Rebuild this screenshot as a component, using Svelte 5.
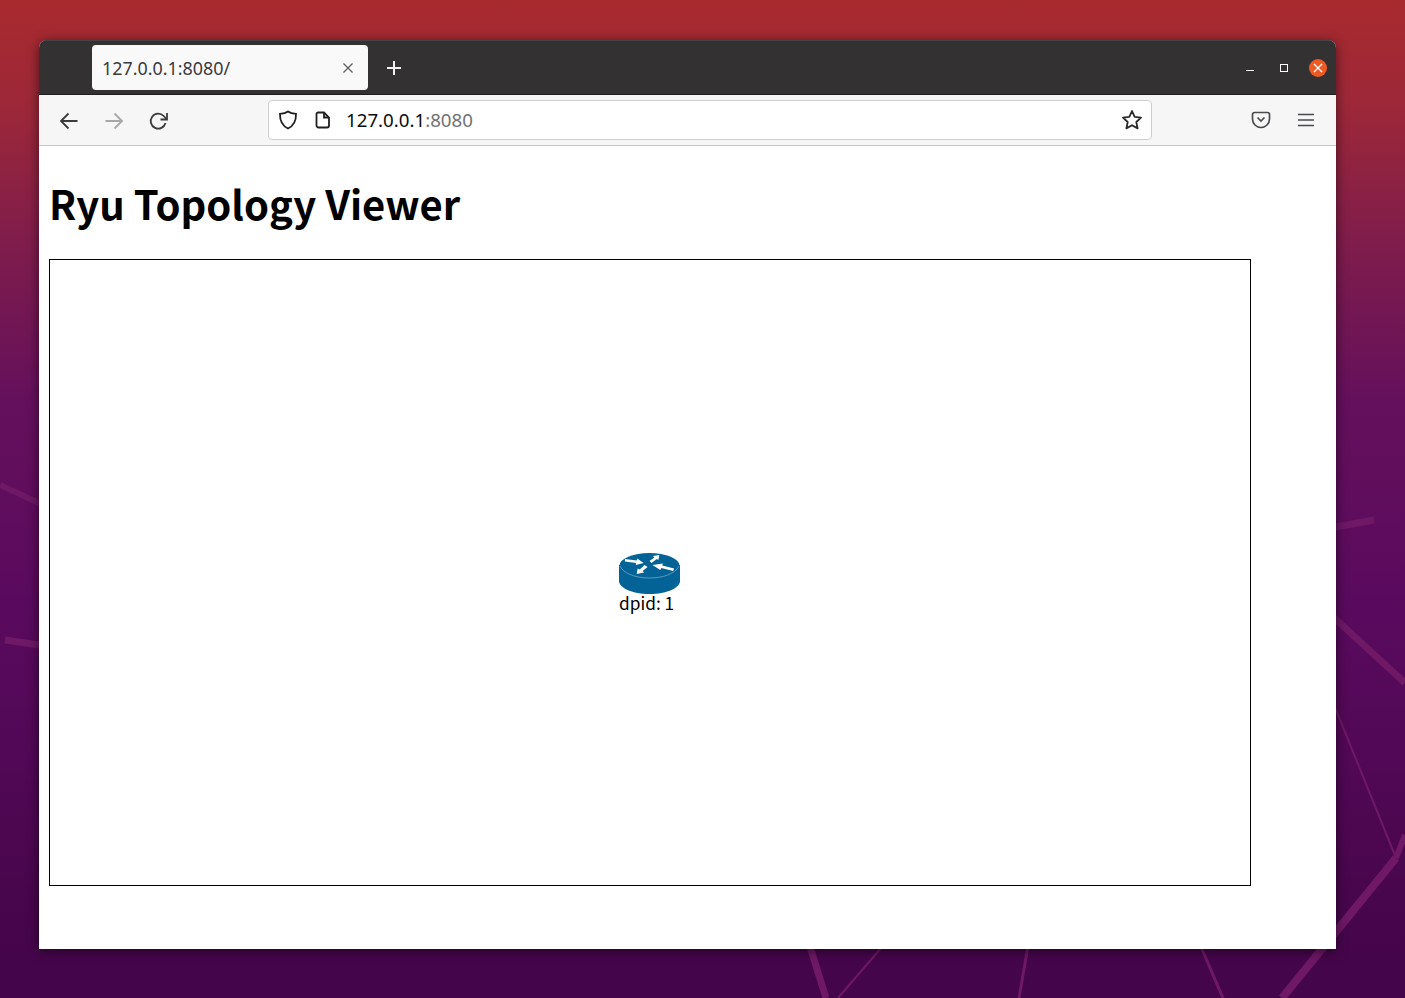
<script>
	const streaks = [
		{ d: 'M0 485L39 503', w: 6 },
		{ d: 'M5 640L39 645', w: 7 },
		{ d: 'M1330 528L1374 520', w: 7 },
		{ d: 'M1330 614L1405 683', w: 7 },
		{ d: 'M1330 695L1396 858', w: 2 },
		{ d: 'M1396 858L1282 998', w: 8 },
		{ d: 'M1396 858L1405 835', w: 6 },
		{ d: 'M808 940L826 998', w: 7 },
		{ d: 'M888 940L838 998', w: 2 },
		{ d: 'M1029 940L1019 998', w: 3 },
		{ d: 'M1198 940L1223 998', w: 3 }
	];
</script>

<div class="desktop">
	<svg class="streaks" width="1405" height="998" aria-hidden="true">
		{#each streaks as s}
			<path d={s.d} stroke-width={s.w} />
		{/each}
	</svg>

	<div class="window">
		<header class="titlebar">
			<div class="tab">
				<span class="tab-title">127.0.0.1:8080/</span>
				<svg class="tab-close" width="12" height="12" viewBox="0 0 12 12">
					<path d="M1.500 1.500l9 9M10.500 1.500l-9 9" />
				</svg>
			</div>
			<svg class="new-tab" width="16" height="16" viewBox="0 0 16 16">
				<path d="M8 1v14M1 8h14" />
			</svg>
			<div class="win-controls">
				<span class="win-min"></span>
				<span class="win-max"></span>
				<span class="win-close">
					<svg width="10" height="10" viewBox="0 0 10 10">
						<path d="M1 1l8 8M9 1l-8 8" />
					</svg>
				</span>
			</div>
		</header>

		<nav class="toolbar">
			<svg class="tool nav" width="20" height="20" viewBox="0 0 20 20">
				<path d="M18.500 10H2M9.500 2.500L2 10l7.500 7.500" />
			</svg>
			<svg class="tool nav disabled" width="20" height="20" viewBox="0 0 20 20">
				<path d="M1.500 10H18M10.500 2.500L18 10l-7.500 7.500" />
			</svg>
			<svg class="tool nav" width="20" height="20" viewBox="0 0 20 20">
				<path d="M16.500 12a7.500 7.500 0 1 1-1.800-7L17.500 8" />
				<path d="M18 2v6.500h-6.500" fill="#3b3b3d" stroke="none" />
			</svg>

			<div class="urlbar">
				<svg class="url-icon" width="20" height="20" viewBox="0 0 20 20">
					<path d="M10 1.500c2 1.500 5 2.200 8 2.400 .2 7-2.500 12-8 14.600C4.500 15.900 1.800 10.900 2 3.900c3-.2 6-.9 8-2.400z" />
				</svg>
				<svg class="url-icon page" width="16" height="18" viewBox="0 0 16 18">
					<path d="M3 1.500h6l5 5v8a2 2 0 0 1-2 2H3.500a2 2 0 0 1-2-2V3a1.500 1.500 0 0 1 1.500-1.500z" />
					<path d="M9 1.500V6.500h5" fill="#1f1f21" stroke="none" />
				</svg>
				<span class="url"><span class="host">127.0.0.1</span>:8080</span>
				<svg class="star" width="22" height="22" viewBox="0 0 22 22">
					<path d="M11 2l2.700 5.900 6.300.8-4.700 4.300 1.300 6.400L11 16.200l-5.600 3.200 1.300-6.400L2 8.700l6.300-.8z" />
				</svg>
			</div>

			<svg class="tool pocket" width="20" height="18" viewBox="0 0 20 18">
				<path d="M3.500 1.500h13a2 2 0 0 1 2 2v4.500a8.500 8.500 0 0 1-17 0V3.500a2 2 0 0 1 2-2z" />
				<path d="M6.500 6.500L10 10l3.500-3.500" />
			</svg>
			<svg class="tool menu" width="16" height="14" viewBox="0 0 16 14">
				<path d="M0 1.500h16M0 7h16M0 12.500h16" />
			</svg>
		</nav>

		<main class="page-body">
			<h1>Ryu Topology Viewer</h1>
			<div class="graph">
				<div class="node">
					<svg width="61" height="41" viewBox="0 0 62 41" preserveAspectRatio="none">
						<path d="M0 12v16c0 7 14 13 31 13s31-6 31-13V12z" fill="#036397" />
						<ellipse cx="31" cy="12.500" rx="30.500" ry="12.500" fill="#036397" />
						<path d="M1 13c3 7 15 12 30 12s27-5 30-12" fill="none" stroke="#fff" stroke-opacity=".35" stroke-width="1" />
						<path class="arrow" d="M6 6l12 1.500 .5-2L25 10l-8 2 .5-2L6 8.500z" />
						<path class="arrow" d="M31 8l5-3.500L34.500 3 41 2l-1 5-1.500-1L33 10z" />
						<path class="arrow" d="M56 15.500l-12-3 .5-2-10.500 1.500 8 5 1-2 12 3z" />
						<path class="arrow" d="M29 14l-5 4 1.500 1.500L18 21l1-5.500 2 1 5-4.500z" />
					</svg>
					<span class="label">dpid: 1</span>
				</div>
			</div>
		</main>
	</div>
</div>

<style>
	:global(body) {
		margin: 0;
	}
	.desktop {
		position: relative;
		width: 1405px;
		height: 998px;
		box-sizing: border-box;
		padding: 40px 69px 49px 39px;
		overflow: hidden;
		background: linear-gradient(
			180deg,
			#a82a2e 0%,
			#9e2838 10%,
			#7e1c4c 25%,
			#65105c 40%,
			#5a0a5e 60%,
			#520856 75%,
			#48064c 90%,
			#44054a 100%
		);
		font-family: "Noto Sans", "Open Sans", sans-serif;
	}
	.streaks {
		position: absolute;
		top: 0;
		left: 0;
	}
	.streaks path {
		stroke: #6e1866;
		fill: none;
	}
	.window {
		position: relative;
		display: flex;
		flex-direction: column;
		height: 100%;
		border-radius: 8px 8px 0 0;
		overflow: hidden;
		background: #fff;
		box-shadow: 0 2px 12px rgba(0, 0, 0, 0.55);
	}
	.titlebar {
		flex: none;
		display: flex;
		align-items: center;
		height: 55px;
		box-sizing: border-box;
		padding-left: 53px;
		background: #333132;
		border-top: 1px solid #454344;
		border-bottom: 1px solid #1e1e1e;
	}
	.tab {
		display: flex;
		align-items: center;
		justify-content: space-between;
		width: 276px;
		height: 45px;
		box-sizing: border-box;
		margin-top: -1px;
		padding: 1px 14px 0 10px;
		background: #f9f9fa;
		border-radius: 4px;
		color: #3b3b3d;
		font-size: 17.900px;
	}
	.tab-close path {
		stroke: #5c5c60;
		stroke-width: 1.200;
		fill: none;
	}
	.new-tab {
		margin-left: 18px;
	}
	.new-tab path {
		stroke: #f2f2f2;
		stroke-width: 2;
		fill: none;
	}
	.win-controls {
		display: flex;
		align-items: center;
		margin-left: auto;
		padding-right: 9px;
	}
	.win-min {
		width: 8px;
		height: 1px;
		margin: 6px 26px 0 0;
		background: #fff;
	}
	.win-max {
		width: 6px;
		height: 6px;
		margin-right: 21px;
		border: 1px solid #fff;
	}
	.win-close {
		display: flex;
		align-items: center;
		justify-content: center;
		width: 18px;
		height: 18px;
		border-radius: 50%;
		background: #ee5a24;
	}
	.win-close path {
		stroke: #fff;
		stroke-width: 1.300;
		fill: none;
	}
	.toolbar {
		flex: none;
		display: flex;
		align-items: center;
		height: 51px;
		box-sizing: border-box;
		padding: 0 22px 0 20px;
		background: #f6f6f6;
		border-bottom: 1px solid #c8c8c8;
	}
	.tool {
		flex: none;
		margin-right: 25px;
	}
	.tool path {
		stroke: #3b3b3d;
		stroke-width: 1.800;
		fill: none;
	}
	.tool.nav {
		margin-top: 2px;
	}
	.tool.disabled path {
		stroke: #a8a8aa;
	}
	.urlbar {
		display: flex;
		align-items: center;
		width: 884px;
		height: 40px;
		box-sizing: border-box;
		margin-left: 74px;
		padding: 0 8px 0 9px;
		background: #fff;
		border: 1px solid #cfcfd1;
		border-radius: 4px;
		font-size: 18.700px;
		color: #737373;
	}
	.url-icon {
		flex: none;
	}
	.url-icon path {
		stroke: #1f1f21;
		stroke-width: 1.800;
		fill: none;
	}
	.url-icon.page {
		margin-left: 17px;
	}
	.url {
		margin: 0 0 2px 15px;
	}
	.host {
		color: #0c0c0d;
	}
	.star {
		margin-left: auto;
	}
	.star path {
		stroke: #2b2b2d;
		stroke-width: 1.800;
		fill: none;
		stroke-linejoin: round;
	}
	.pocket {
		margin-left: 99px;
		margin-right: 27px;
	}
	.pocket path {
		stroke: #4a4a4f;
		stroke-width: 1.700;
	}
	.menu {
		margin-right: 0;
	}
	.menu path {
		stroke: #4a4a4f;
		stroke-width: 1.500;
	}
	.page-body {
		flex: 1;
		padding: 0 10px;
		background: #fff;
		color: #000;
	}
	h1 {
		margin: 25px 0 23px;
		font-family: "Noto Sans CJK JP", "Noto Sans", sans-serif;
		font-size: 40px;
		font-weight: 700;
		line-height: 65px;
	}
	.graph {
		position: relative;
		width: 1200px;
		height: 625px;
		border: 1px solid #000;
	}
	.node {
		position: absolute;
		left: 569px;
		top: 293px;
	}
	.node svg {
		display: block;
	}
	.arrow {
		fill: #fff;
	}
	.label {
		display: block;
		margin-top: -1px;
		font-family: "Noto Sans CJK JP", "Noto Sans", sans-serif;
		font-size: 17.300px;
		line-height: 20px;
		white-space: nowrap;
	}
</style>
